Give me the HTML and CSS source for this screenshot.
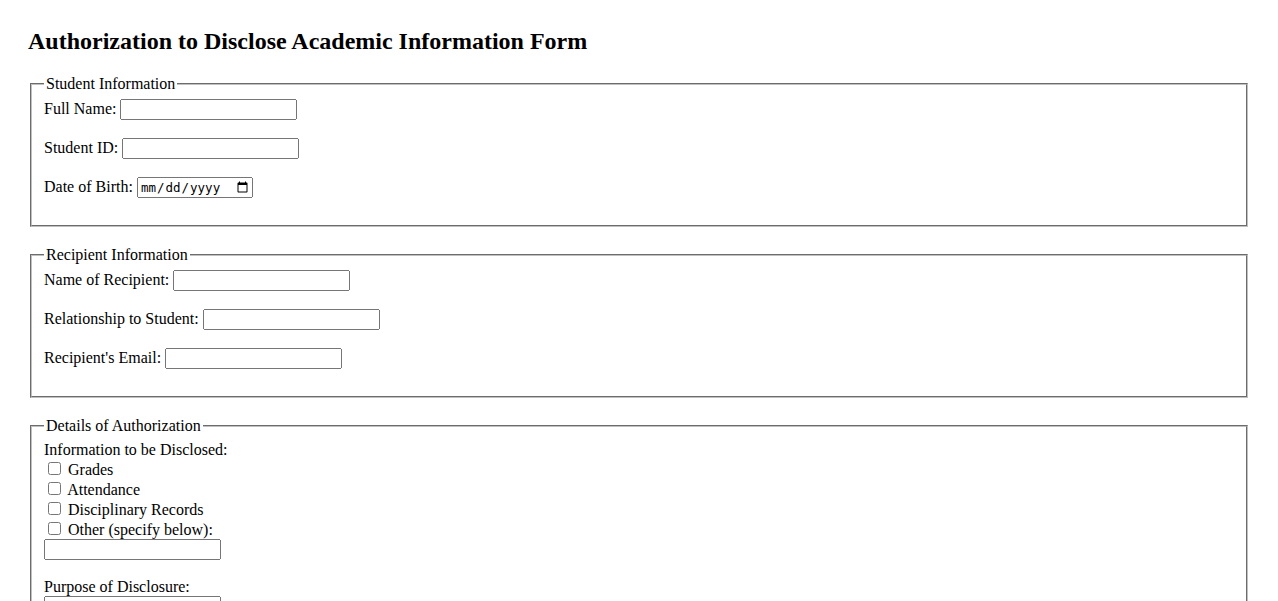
FILE: index.html
```html
<!DOCTYPE html>
<html lang="en">
<head>
<meta charset="utf-8">
<title>Authorization to Disclose Academic Information Form</title>
<link rel="stylesheet" href="styles.css">
</head>
<body>
<div class="page">
  <h2 class="title">Authorization to Disclose Academic Information Form</h2>
  <form class="form">
    <fieldset class="section">
      <legend>Student Information</legend>
      <div class="row"><label for="fullname">Full Name:</label> <input type="text" id="fullname" class="field"></div>
      <div class="row"><label for="sid">Student ID:</label> <input type="text" id="sid" class="field"></div>
      <div class="row"><label for="dob">Date of Birth:</label> <input type="date" id="dob" class="date"></div>
    </fieldset>
    <fieldset class="section">
      <legend>Recipient Information</legend>
      <div class="row"><label for="rname">Name of Recipient:</label> <input type="text" id="rname" class="field"></div>
      <div class="row"><label for="rel">Relationship to Student:</label> <input type="text" id="rel" class="field"></div>
      <div class="row"><label for="remail">Recipient's Email:</label> <input type="email" id="remail" class="field"></div>
    </fieldset>
    <fieldset class="section">
      <legend>Details of Authorization</legend>
      <div class="row">
        <label>Information to be Disclosed:</label><br>
        <input type="checkbox" id="c1" class="check"> <label for="c1">Grades</label><br>
        <input type="checkbox" id="c2" class="check"> <label for="c2">Attendance</label><br>
        <input type="checkbox" id="c3" class="check"> <label for="c3">Disciplinary Records</label><br>
        <input type="checkbox" id="c4" class="check"> <label for="c4">Other (specify below):</label><br>
        <input type="text" class="field">
      </div>
      <div class="row">
        <label for="purpose">Purpose of Disclosure:</label><br>
        <input type="text" id="purpose" class="field">
      </div>
    </fieldset>
  </form>
</div>
</body>
</html>
```

FILE: styles.css
```css
body {
  margin: 8px;
  font-family: "Liberation Serif", "Times New Roman", serif;
  font-size: 16px;
  color: #000;
  background: #fff;
}
.page {
  padding: 20px;
}
.title {
  margin: 0 0 20px;
  font-size: 24px;
  font-weight: bold;
}
.section {
  margin: 0 2px 19px;
  border: 2px groove #c0c0c0;
  padding: 6px 12px 9px;
}
.section legend {
  padding: 0 2px;
}
.row {
  margin-bottom: 18px;
}
.field {
  box-sizing: border-box;
  width: 177px;
  height: 21px;
  font-family: "Liberation Sans", Arial, sans-serif;
  font-size: 13.333px;
}
.date {
  box-sizing: border-box;
  width: 116px;
  height: 21px;
  font-family: "DejaVu Sans Mono", "Liberation Mono", monospace;
  font-size: 12.5px;
}
.check {
  margin: 3px 3px 3px 4px;
}
```
